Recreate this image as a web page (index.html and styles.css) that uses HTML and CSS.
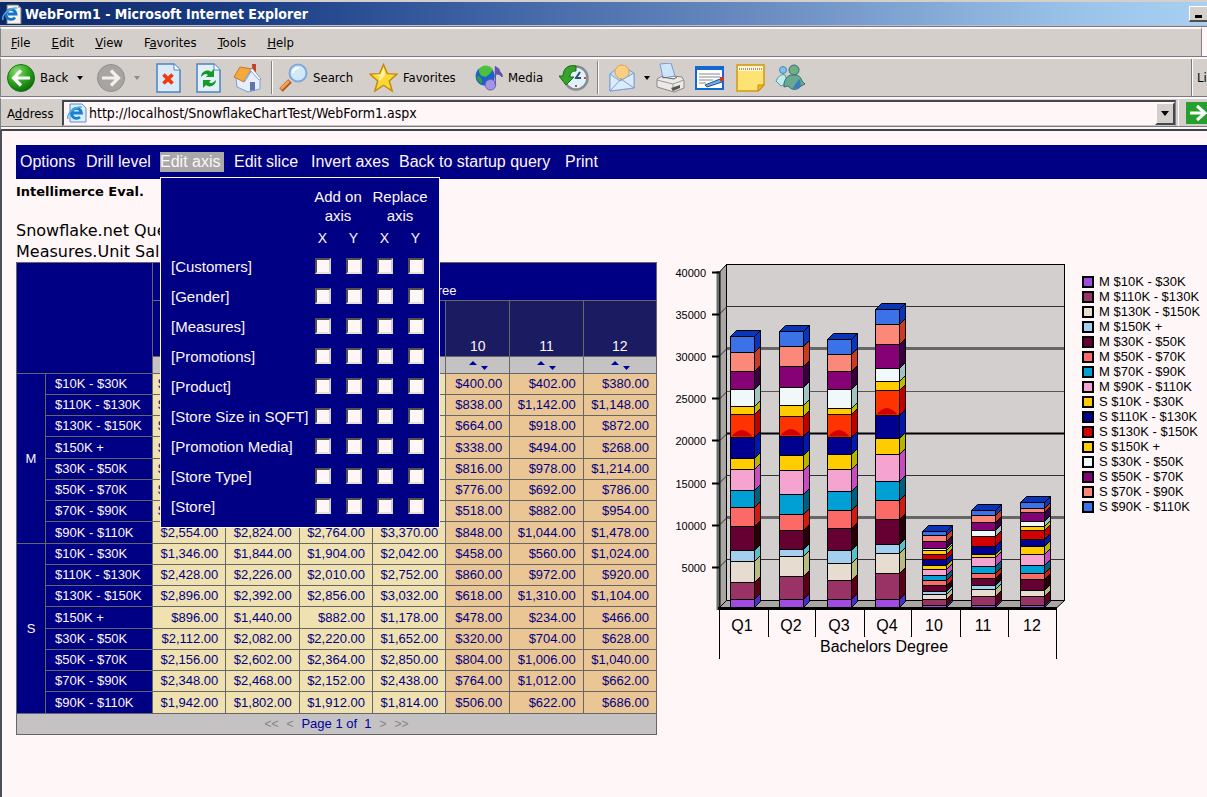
FILE: index.html
```html
<!DOCTYPE html>
<html lang="en">
<head>
<meta charset="utf-8">
<title>WebForm1 - Microsoft Internet Explorer</title>
<link rel="stylesheet" href="styles.css">
</head>
<body>
<header class="titlebar">
  <svg class="title-icon" width="20" height="20" viewBox="0 0 20 20" aria-hidden="true"><path d="M5 1h11l3 3v16H5z" fill="#f5f1ea" stroke="#777"/><path d="M16 1v3h3z" fill="#aaa"/><path d="M13 13.500A5 5 0 1 1 14 10H6" fill="none" stroke="#1673c9" stroke-width="2.800"/><path d="M1 16C-1 11 8 3 15 4" fill="none" stroke="#48aee8" stroke-width="1.500"/></svg>
  <h1 class="title-text">WebForm1 - Microsoft Internet Explorer</h1>
  <button class="minimize" aria-label="Minimize"><span class="minimize-mark"></span></button>
</header>
<nav class="menubar" aria-label="Browser menu">
  <div class="menu-items">
    <button><u>F</u>ile</button><button><u>E</u>dit</button><button><u>V</u>iew</button><button>F<u>a</u>vorites</button><button><u>T</u>ools</button><button><u>H</u>elp</button>
  </div>
  <div class="menu-logo"></div>
</nav>
<div class="toolbar-row">
  <div class="toolbar">
    <button class="tool">
      <svg width="28" height="28" viewBox="0 0 28 28" aria-hidden="true"><defs><radialGradient id="green" cx=".35" cy=".25" r=".8"><stop offset="0" stop-color="#8ada72"/><stop offset=".5" stop-color="#32aa20"/><stop offset="1" stop-color="#0b6608"/></radialGradient></defs><circle cx="14" cy="14" r="13.500" fill="url(#green)" stroke="#18761a"/><path d="M23 14H7M14 6.500L6.500 14l7.500 7.500" fill="none" stroke="#fff" stroke-width="3.200"/></svg>
      <span>Back</span><span class="caret"></span>
    </button>
    <button class="tool" aria-label="Forward">
      <svg width="28" height="28" viewBox="0 0 28 28" aria-hidden="true"><circle cx="14" cy="14" r="13.500" fill="#a6a5a2" stroke="#8e8e8c"/><path d="M5 14h16M14 6.500l7.500 7.500-7.500 7.500" fill="none" stroke="#f3efed" stroke-width="3.200"/></svg>
      <span class="caret caret-off"></span>
    </button>
    <button class="tool" aria-label="Stop">
      <svg width="25" height="30" viewBox="0 0 25 30" aria-hidden="true"><path d="M1 1h17l6 6v22H1z" fill="#dcebfa" stroke="#4b83c8" stroke-width="1.500"/><path d="M18 1v6h6" fill="#fff" stroke="#4b83c8"/><path d="M7.500 11.500l9 9M16.500 11.500l-9 9" stroke="#f23a0e" stroke-width="3.800"/></svg>
    </button>
    <button class="tool" aria-label="Refresh">
      <svg width="25" height="30" viewBox="0 0 25 30" aria-hidden="true"><path d="M1 1h17l6 6v22H1z" fill="#e3effb" stroke="#4b83c8" stroke-width="1.500"/><path d="M18 1v6h6" fill="#fff" stroke="#4b83c8"/><path d="M5 14c0-6 7-8 10-5l3-3v8h-8l2-2c-2-2-4-1-7 2zM20 17c0 6-7 8-10 5l-3 3v-8h8l-2 2c2 2 4 1 7-2z" fill="#159a24"/></svg>
    </button>
    <button class="tool" aria-label="Home">
      <svg width="29" height="30" viewBox="0 0 29 30" aria-hidden="true"><path d="M19 1h4v8h-4z" fill="#c8402a"/><path d="M3 15l9 2 7-10 8 8v11l-12 3L4 24z" fill="#e4effb" stroke="#7c9fcb"/><path d="M7 4l12 2-8 13-10-5z" fill="#f5a83c" stroke="#c9771c"/><path d="M19 5l9 11-2 1-8-9-5 9-2 1z" fill="#fff" stroke="#6e93bc" stroke-width=".8"/><path d="M17 19h5v8l-5 1z" fill="#5f75a8"/></svg>
    </button>
    <span class="divider"></span>
    <button class="tool">
      <svg width="29" height="29" viewBox="0 0 29 29" aria-hidden="true"><path d="M2 27l9-9" stroke="#a8541b" stroke-width="5"/><path d="M2 26l8-8" stroke="#f4a052" stroke-width="3"/><circle cx="19" cy="10" r="8.500" fill="#cfe9fb" stroke="#7fa8dc" stroke-width="2"/><path d="M14 10c0-4 3-5 6-5" fill="none" stroke="#fff" stroke-width="2"/></svg>
      <span>Search</span>
    </button>
    <button class="tool">
      <svg width="29" height="30" viewBox="0 0 30 30" aria-hidden="true"><path d="M15 1l4 9.500 10 .5-8 7 3 10.500-9-6-9 6L9 18l-8-7 10-.5z" fill="#fbd837" stroke="#c28a0b" stroke-width="1.500"/><path d="M15 4l2 8-7 7 1-6-6-1 7-.5z" fill="#fff3a0"/></svg>
      <span>Favorites</span>
    </button>
    <button class="tool">
      <svg width="28" height="27" viewBox="0 0 29 27" aria-hidden="true"><circle cx="10.500" cy="12" r="10" fill="#1c62c9"/><path d="M4 5c5-6 10-4 14-1 0 4-3 6-7 9-4-1-7-2-7-8z" fill="#4cc23c"/><path d="M2 12c4 0 6 4 5 8-4-2-5-5-5-8z" fill="#2f9f38"/><circle cx="16" cy="21" r="5.500" fill="#a495e0" stroke="#6a5ab8"/><path d="M21 21V2l4 3c0 4 4 3 3 8-2-3-4-3-6-3" fill="#6354b4" stroke="#574aa5"/></svg>
      <span>Media</span>
    </button>
    <button class="tool" aria-label="History">
      <svg width="30" height="28" viewBox="0 0 30 28" aria-hidden="true"><circle cx="17" cy="14" r="11.500" fill="#dff1fb" stroke="#858d93" stroke-width="2.500"/><path d="M17 14l4-6M16 14h6" stroke="#334f6b" stroke-width="2"/><path d="M17 2C8 0 4 6 4 12H0l7 9 8-8h-4c0-4 2-6 6-6z" fill="#36a32a" stroke="#1c6a1a"/><path d="M17 21v2M25 14h2" stroke="#d0502f" stroke-width="2"/></svg>
    </button>
    <span class="divider"></span>
    <button class="tool" aria-label="Mail">
      <svg width="26" height="28" viewBox="0 0 26 28" aria-hidden="true"><path d="M1 10L12 1l13 8v15L1 27z" fill="#c4dcf6" stroke="#7298cb"/><circle cx="13" cy="8" r="7" fill="#fbcf83" stroke="#e3a24b"/><path d="M1 10l10 7L25 9v15L1 27z" fill="#dcecfb" stroke="#7ba1d2"/><path d="M1 27l11-12 13 9" fill="none" stroke="#7ba1d2"/></svg>
      <span class="caret"></span>
    </button>
    <button class="tool" aria-label="Print">
      <svg width="29" height="30" viewBox="0 0 29 30" aria-hidden="true"><path d="M1 16l7-4 18 2 2 4v7l-10 4L1 24z" fill="#eceae6" stroke="#888"/><path d="M4 1l11-1 4 13-12 2z" fill="#cfe4fa" stroke="#779cc8"/><path d="M1 17l16 4 11-4M17 21v8" fill="none" stroke="#999"/><path d="M6 14l12 2 3-2" fill="none" stroke="#666"/><path d="M15 25l9-3v3l-7 3z" fill="#555"/></svg>
    </button>
    <button class="tool" aria-label="Edit">
      <svg width="30" height="26" viewBox="0 0 30 26" aria-hidden="true"><path d="M1 2h27v22H1z" fill="#fff" stroke="#1468d0" stroke-width="2"/><path d="M1 2h27v3H1z" fill="#1468d0"/><path d="M4 9h21M4 12h21M4 15h14M4 18h7" stroke="#888"/><path d="M10 20l15-6 2 3-15 5z" fill="#68aef0" stroke="#28558c"/><path d="M25 12h4v4h-4z" fill="#d5331e"/></svg>
    </button>
    <button class="tool" aria-label="Discuss">
      <svg width="29" height="28" viewBox="0 0 29 28" aria-hidden="true"><path d="M1 1h27v20l-6 6H1z" fill="#fce373" stroke="#d19a10" stroke-width="1.500"/><path d="M2 2h25v5H2z" fill="#fff5d6"/><path d="M3 5h23" stroke="#a99a77" stroke-dasharray="1 1" stroke-width="2"/><path d="M22 27v-6h6z" fill="#f6b91d" stroke="#c48a08"/></svg>
    </button>
    <button class="tool" aria-label="Messenger">
      <svg width="30" height="27" viewBox="0 0 30 27" aria-hidden="true"><circle cx="8" cy="6" r="3.500" fill="#7fc0e8" stroke="#4787b8"/><path d="M1 17c3-6 6-7 9-6l3 8-7 3z" fill="#c4ece8" stroke="#4e98a8"/><circle cx="19" cy="6" r="5" fill="#6faf83" stroke="#386d75"/><path d="M9 19c3-9 7-8 10-8s6 0 8 6l3 3-4 2c-4 5-10 4-13 0l-4 1z" fill="#69a98d" stroke="#356c8a"/><path d="M24 15c2 2 2 5 1 9l-8 1z" fill="#3b7cbc"/></svg>
    </button>
  </div>
  <div class="links-label">Links</div>
</div>
<form class="address-row">
  <label for="url">A<u>d</u>dress</label>
  <div class="address-box">
    <svg width="20" height="20" viewBox="0 0 20 20" aria-hidden="true"><path d="M3 1h12l4 4v14H3z" fill="#e0eefb" stroke="#5b8ccd"/><path d="M13 14A5 5 0 1 1 14.500 10H6" fill="none" stroke="#1681d3" stroke-width="2.800"/><path d="M1 16C-1 11 8 3 15 4" fill="none" stroke="#45aeea" stroke-width="1.500"/></svg>
    <input id="url" type="text" value="http://localhost/SnowflakeChartTest/WebForm1.aspx">
    <button type="button" class="drop" aria-label="Show addresses"><span class="caret"></span></button>
  </div>
  <button type="button" class="go" aria-label="Go"><svg width="24" height="22" viewBox="0 0 24 22" aria-hidden="true"><path d="M0 0h24v22H0z" fill="#25a02c"/><path d="M4 11h15M11 4l8 7-8 7" fill="none" stroke="#fff" stroke-width="3"/></svg></button>
</form>
<main class="page">
  <nav class="query-nav" aria-label="Query">
    <a href="#options">Options</a>
    <a href="#drill">Drill level</a>
    <div class="axis-menu">
      <a class="active" href="#axis">Edit axis</a>
      <form class="popup">
        <table class="axis-table">
          <colgroup><col class="axis-name"><col><col><col><col></colgroup>
          <thead>
            <tr class="axis-head"><th></th><th colspan="2">Add on axis</th><th colspan="2">Replace axis</th></tr>
            <tr class="axis-xy"><th></th><th>X</th><th>Y</th><th>X</th><th>Y</th></tr>
          </thead>
          <tbody>
            <tr><th>[Customers]</th><td><input type="checkbox" aria-label="Customers add X"></td><td><input type="checkbox" aria-label="Customers add Y"></td><td><input type="checkbox" aria-label="Customers replace X"></td><td><input type="checkbox" aria-label="Customers replace Y"></td></tr>
            <tr><th>[Gender]</th><td><input type="checkbox" aria-label="Gender add X"></td><td><input type="checkbox" aria-label="Gender add Y"></td><td><input type="checkbox" aria-label="Gender replace X"></td><td><input type="checkbox" aria-label="Gender replace Y"></td></tr>
            <tr><th>[Measures]</th><td><input type="checkbox" aria-label="Measures add X"></td><td><input type="checkbox" aria-label="Measures add Y"></td><td><input type="checkbox" aria-label="Measures replace X"></td><td><input type="checkbox" aria-label="Measures replace Y"></td></tr>
            <tr><th>[Promotions]</th><td><input type="checkbox" aria-label="Promotions add X"></td><td><input type="checkbox" aria-label="Promotions add Y"></td><td><input type="checkbox" aria-label="Promotions replace X"></td><td><input type="checkbox" aria-label="Promotions replace Y"></td></tr>
            <tr><th>[Product]</th><td><input type="checkbox" aria-label="Product add X"></td><td><input type="checkbox" aria-label="Product add Y"></td><td><input type="checkbox" aria-label="Product replace X"></td><td><input type="checkbox" aria-label="Product replace Y"></td></tr>
            <tr><th>[Store Size in SQFT]</th><td><input type="checkbox" aria-label="Store Size add X"></td><td><input type="checkbox" aria-label="Store Size add Y"></td><td><input type="checkbox" aria-label="Store Size replace X"></td><td><input type="checkbox" aria-label="Store Size replace Y"></td></tr>
            <tr><th>[Promotion Media]</th><td><input type="checkbox" aria-label="Promotion Media add X"></td><td><input type="checkbox" aria-label="Promotion Media add Y"></td><td><input type="checkbox" aria-label="Promotion Media replace X"></td><td><input type="checkbox" aria-label="Promotion Media replace Y"></td></tr>
            <tr><th>[Store Type]</th><td><input type="checkbox" aria-label="Store Type add X"></td><td><input type="checkbox" aria-label="Store Type add Y"></td><td><input type="checkbox" aria-label="Store Type replace X"></td><td><input type="checkbox" aria-label="Store Type replace Y"></td></tr>
            <tr><th>[Store]</th><td><input type="checkbox" aria-label="Store add X"></td><td><input type="checkbox" aria-label="Store add Y"></td><td><input type="checkbox" aria-label="Store replace X"></td><td><input type="checkbox" aria-label="Store replace Y"></td></tr>
          </tbody>
        </table>
      </form>
    </div>
    <a href="#slice">Edit slice</a>
    <a href="#invert">Invert axes</a>
    <a href="#startup">Back to startup query</a>
    <a href="#print">Print</a>
  </nav>
  <p class="eval">Intellimerce Eval.</p>
  <p class="query-title">Snowflake.net Query</p>
  <p class="query-title">Measures.Unit Sales</p>
  <div class="results">
    <table class="pivot">
      <colgroup><col class="c-group"><col class="c-range"><col class="c-wide"><col class="c-wide"><col class="c-wide"><col class="c-wide"><col class="c-month"><col class="c-wide"><col class="c-wide"></colgroup>
      <thead>
        <tr class="h-top"><th colspan="2" rowspan="3"></th><th colspan="7">Bachelors Degree</th></tr>
        <tr class="h-cols"><th></th><th></th><th></th><th></th><th class="month">10</th><th class="month">11</th><th class="month">12</th></tr>
        <tr class="h-sort"><td></td><td></td><td></td><td></td>
          <td><button aria-label="Sort 10"><svg width="20" height="10" viewBox="0 0 20 10"><path d="M1 5l4-4 4 4zM13 6h7l-3.500 4z"/></svg></button></td>
          <td><button aria-label="Sort 11"><svg width="20" height="10" viewBox="0 0 20 10"><path d="M1 5l4-4 4 4zM13 6h7l-3.500 4z"/></svg></button></td>
          <td><button aria-label="Sort 12"><svg width="20" height="10" viewBox="0 0 20 10"><path d="M1 5l4-4 4 4zM13 6h7l-3.500 4z"/></svg></button></td></tr>
      </thead>
      <tbody>
        <tr><th class="group" rowspan="8">M</th><th>$10K - $30K</th><td class="cut">$</td><td></td><td></td><td></td><td>$400.00</td><td>$402.00</td><td>$380.00</td></tr>
        <tr><th>$110K - $130K</th><td class="cut">$</td><td></td><td></td><td></td><td>$838.00</td><td>$1,142.00</td><td>$1,148.00</td></tr>
        <tr><th>$130K - $150K</th><td class="cut">$</td><td></td><td></td><td></td><td>$664.00</td><td>$918.00</td><td>$872.00</td></tr>
        <tr><th>$150K +</th><td class="cut">$</td><td></td><td></td><td></td><td>$338.00</td><td>$494.00</td><td>$268.00</td></tr>
        <tr><th>$30K - $50K</th><td class="cut">$</td><td></td><td></td><td></td><td>$816.00</td><td>$978.00</td><td>$1,214.00</td></tr>
        <tr><th>$50K - $70K</th><td class="cut">$</td><td></td><td></td><td></td><td>$776.00</td><td>$692.00</td><td>$786.00</td></tr>
        <tr><th>$70K - $90K</th><td class="cut">$</td><td></td><td></td><td></td><td>$518.00</td><td>$882.00</td><td>$954.00</td></tr>
        <tr><th>$90K - $110K</th><td>$2,554.00</td><td>$2,824.00</td><td>$2,764.00</td><td>$3,370.00</td><td>$848.00</td><td>$1,044.00</td><td>$1,478.00</td></tr>
        <tr><th class="group" rowspan="8">S</th><th>$10K - $30K</th><td>$1,346.00</td><td>$1,844.00</td><td>$1,904.00</td><td>$2,042.00</td><td>$458.00</td><td>$560.00</td><td>$1,024.00</td></tr>
        <tr><th>$110K - $130K</th><td>$2,428.00</td><td>$2,226.00</td><td>$2,010.00</td><td>$2,752.00</td><td>$860.00</td><td>$972.00</td><td>$920.00</td></tr>
        <tr><th>$130K - $150K</th><td>$2,896.00</td><td>$2,392.00</td><td>$2,856.00</td><td>$3,032.00</td><td>$618.00</td><td>$1,310.00</td><td>$1,104.00</td></tr>
        <tr><th>$150K +</th><td>$896.00</td><td>$1,440.00</td><td>$882.00</td><td>$1,178.00</td><td>$478.00</td><td>$234.00</td><td>$466.00</td></tr>
        <tr><th>$30K - $50K</th><td>$2,112.00</td><td>$2,082.00</td><td>$2,220.00</td><td>$1,652.00</td><td>$320.00</td><td>$704.00</td><td>$628.00</td></tr>
        <tr><th>$50K - $70K</th><td>$2,156.00</td><td>$2,602.00</td><td>$2,364.00</td><td>$2,850.00</td><td>$804.00</td><td>$1,006.00</td><td>$1,040.00</td></tr>
        <tr><th>$70K - $90K</th><td>$2,348.00</td><td>$2,468.00</td><td>$2,152.00</td><td>$2,438.00</td><td>$764.00</td><td>$1,012.00</td><td>$662.00</td></tr>
        <tr><th>$90K - $110K</th><td>$1,942.00</td><td>$1,802.00</td><td>$1,912.00</td><td>$1,814.00</td><td>$506.00</td><td>$622.00</td><td>$686.00</td></tr>
      </tbody>
      <tfoot>
        <tr><td colspan="9"><div class="pager"><span class="off">&lt;&lt;</span><span class="off">&lt;</span><span>Page 1 of &nbsp;1</span><span class="off">&gt;</span><span class="off">&gt;&gt;</span></div></td></tr>
      </tfoot>
    </table>
    <svg id="chart" class="chart" width="400" height="400" viewBox="670 262 400 400" role="img" aria-label="Unit sales by quarter"></svg>
    <ul id="legend" class="legend"></ul>
  </div>
</main>
<script src="chart.js"></script>
</body>
</html>
```

FILE: styles.css
```css
* { box-sizing: border-box; }
html, body { height: 100%; }
body {
  margin: 0;
  display: flex;
  flex-direction: column;
  min-height: 100%;
  overflow: hidden;
  background: #fff6f7;
  color: #000;
  font: 13px/16px "DejaVu Sans Condensed", "DejaVu Sans", sans-serif;
}
button {
  margin: 0;
  padding: 0;
  border: 0;
  background: none;
  color: inherit;
  font: inherit;
}
.titlebar {
  display: flex;
  align-items: center;
  height: 26px;
  border-top: 2px solid #d5cfcb;
  border-bottom: 1px solid #b8c0d0;
  background: linear-gradient(90deg, #0e2868, #1a3c84 20%, #3f62a4 40%, #6e90c4 65%, #9cc4ea 90%, #a8d0f2);
}
.title-icon { margin: 0 3px 0 2px; }
.title-text {
  flex: 1;
  margin: 0;
  color: #fff;
  font-size: 14px;
  font-weight: bold;
}
.minimize {
  display: flex;
  align-items: flex-end;
  justify-content: flex-start;
  width: 18px;
  height: 16px;
  padding: 0 0 2px 5px;
  border: 1px solid #fff;
  border-right: 0;
  border-bottom: 2px solid #50504e;
  background: #d5cfcb;
}
.minimize-mark { width: 7px; height: 3px; background: #000; }
.menubar {
  display: flex;
  height: 31px;
  border-top: 1px solid #777b80;
  border-bottom: 1px solid #777b80;
  background: #d5cfcb;
}
.menu-items {
  display: flex;
  align-items: center;
  flex: 1;
  gap: 21px;
  padding-left: 10px;
  border-top: 2px solid #fff6f7;
  border-right: 1px solid #808488;
  border-left: 1px solid #808488;
}
.menu-logo { width: 5px; background: #fff6f7; }
.toolbar-row {
  display: flex;
  height: 40px;
  border-top: 2px solid #fff6f7;
  border-bottom: 1px solid #777b80;
  border-left: 1px solid #808488;
  background: #d5cfcb;
}
.toolbar {
  flex: 1;
  display: grid;
  grid-template-columns: 90px 59px 40px 37px 38px 8px 90px 106px 84px 38px 12px 47px 39px 41px 39px 40px;
  align-items: center;
  justify-items: start;
  padding-left: 6px;
  border-right: 1px solid #777b80;
}
.tool {
  display: flex;
  align-items: center;
  gap: 5px;
  white-space: nowrap;
}
.tool svg { flex: none; }
.caret {
  margin: 0 4px;
  border: 3px solid transparent;
  border-top: 4px solid #000;
  border-bottom: 0;
}
.caret-off { border-top-color: #8c8c8a; }
.divider {
  width: 2px;
  height: 33px;
  border-left: 1px solid #808488;
  background: #fff;
}
.links-label {
  display: flex;
  align-items: center;
  width: 15px;
  padding-left: 4px;
  border-left: 1px solid #fff;
  overflow: hidden;
}
.address-row {
  display: flex;
  align-items: center;
  height: 34px;
  padding: 0 0 0 6px;
  border-top: 2px solid #fff6f7;
  border-bottom: 2px solid #40444a;
  border-left: 1px solid #808488;
  background: #d5cfcb;
  box-shadow: inset 0 -2px #fff6f7, inset 0 -3px #777b80;
}
.address-row label { width: 55px; }
.address-box {
  display: flex;
  align-items: center;
  flex: 1;
  height: 26px;
  margin-bottom: 3px;
  padding-left: 3px;
  border: 2px solid #44484c;
  border-right: 1px solid #808488;
  border-bottom: 1px solid #c8c4c2;
  background: #fff6f7;
}
.address-box input {
  flex: 1;
  min-width: 0;
  padding: 0 2px;
  border: 0;
  outline: 0;
  background: none;
  color: #000;
  font: inherit;
  font-size: 14px;
}
.drop {
  display: flex;
  align-items: center;
  justify-content: center;
  width: 20px;
  height: 23px;
  border: 2px solid #fff6f7;
  border-right-color: #44484c;
  border-bottom-color: #44484c;
  background: #d5cfcb;
}
.drop .caret { margin: 0; border-width: 5px 4px 0; }
.go {
  display: flex;
  align-items: center;
  width: 29px;
  height: 26px;
  margin: 0 0 3px 2px;
  padding-left: 7px;
  border-left: 1px solid #fff;
  overflow: hidden;
}
.go svg { flex: none; }

.page {
  flex: 1;
  padding: 14px 0 0 14px;
  border-left: 2px solid #4c5056;
  font-family: "Liberation Sans", sans-serif;
}
.query-nav {
  display: grid;
  grid-template-columns: 66px 74px 74px 77px 88px 166px auto;
  align-items: center;
  height: 34px;
  padding-left: 4px;
  background: #000084;
  color: #fff6f7;
  font-size: 16px;
  line-height: 20px;
  white-space: nowrap;
}
.query-nav a { color: inherit; text-decoration: none; }
.axis-menu { position: relative; }
.query-nav .active { display: block; width: 64px; background: #a9a9a9; }
.popup {
  position: absolute;
  top: 25px;
  left: 0;
  z-index: 2;
  padding: 9px 8px 6px;
  border: 1px solid #fff6f7;
  background: #000084;
}
.axis-table {
  border-collapse: collapse;
  table-layout: fixed;
  width: 262px;
  font-size: 15px;
  line-height: 19px;
}
.axis-name { width: 138px; }
.axis-table th, .axis-table td { padding: 0; font-weight: normal; text-align: center; }
.axis-head th { white-space: normal; }
.axis-xy { height: 26px; font-size: 14px; }
.axis-table tbody tr { height: 30px; }
.axis-table tbody th { padding-left: 2px; text-align: left; }
.axis-table input {
  display: block;
  appearance: none;
  width: 16px;
  height: 16px;
  margin: 0 auto;
  border: 2px solid #505050;
  border-right-color: #d5cfcb;
  border-bottom-color: #e8e2de;
  background: #fff6f7;
}
.eval {
  margin: 0 0 15px;
  font: bold 13px/26px "DejaVu Sans", sans-serif;
}
.query-title {
  margin: 0;
  font: 16px/21px "DejaVu Sans", sans-serif;
}
.results { display: flex; align-items: flex-start; }
.pivot {
  flex: none;
  width: 641px;
  border-collapse: collapse;
  table-layout: fixed;
  color: #000084;
  font-size: 13px;
  line-height: 16px;
}
.c-group { width: 29px; }
.c-range { width: 107px; }
.c-month { width: 64px; }
.pivot th, .pivot td { padding: 0; border: 1px solid #666668; font-weight: normal; }
.pivot th { background: #000084; color: #fff6f7; }
.pivot thead th { vertical-align: bottom; }
.h-top { height: 38px; }
.h-top th { padding-bottom: 1px; }
.h-cols { height: 56px; font-size: 14px; }
.pivot .h-cols th { padding-bottom: 2px; }
.pivot .h-cols .month { background: #1b1b62; }
.h-sort { height: 17px; }
.pivot .h-sort td { background: #c4c2c2; text-align: center; }
.h-sort button { display: block; margin: 0 auto; height: 10px; }
.h-sort svg { display: block; fill: #0000a0; }
.pivot tbody tr { height: 21px; }
.pivot tbody tr:nth-child(4n) { height: 22px; }
.pivot tbody th { padding-left: 9px; text-align: left; }
.pivot tbody .group { padding: 0; text-align: center; }
.pivot tbody td { padding-right: 7px; background: #efe2b0; text-align: right; }
.pivot tbody td:nth-last-child(-n+3) { background: #eac694; }
.pivot tbody .cut { padding-left: 5px; text-align: left; }
.pivot tfoot td { height: 21px; background: #c4c2c2; }
.pager { display: flex; justify-content: center; gap: 8px; font-size: 13px; color: #0000a0; }
.pager .off { color: #858585; font-size: 12px; }

.chart { display: block; flex: none; margin-left: 13px; }
.chart text { font-family: "Liberation Sans", sans-serif; fill: #000; }
.tick { font-size: 11px; text-anchor: end; }
.cat { font-size: 16px; text-anchor: middle; }
.legend {
  flex: none;
  margin: 12px 0 0 12px;
  padding: 0;
  list-style: none;
  font-size: 13px;
  line-height: 15px;
  white-space: nowrap;
}
.legend li { display: flex; align-items: center; gap: 5px; }
.swatch { width: 12px; height: 12px; border: 2px solid #000; }
```

FILE: chart.js
```javascript
const series = [
  ["S $90K - $110K", "#3c72e8", "#0a35b8"],
  ["S $70K - $90K", "#fb8878", "#c83c24"],
  ["S $50K - $70K", "#860076", "#38003c"],
  ["S $30K - $50K", "#f0f8fa", "#a0c4c0"],
  ["S $150K +", "#ffcc00", "#bcbc00"],
  ["S $130K - $150K", "#d20000", "#c00000"],
  ["S $110K - $130K", "#000090", "#0018b0"],
  ["S $10K - $30K", "#ffcc00", "#b4b400"],
  ["M $90K - $110K", "#f5a4d2", "#c64cc0"],
  ["M $70K - $90K", "#009fd4", "#00607c"],
  ["M $50K - $70K", "#fb6a66", "#d01c10"],
  ["M $30K - $50K", "#660032", "#280008"],
  ["M $150K +", "#a4cfee", "#58c0c8"],
  ["M $130K - $150K", "#e6ddd0", "#b8bc80"],
  ["M $110K - $130K", "#993366", "#5c0018"],
  ["M $10K - $30K", "#a04ce0", "#4830c4"]
];
// Each bar: label, left edge, then the top edge of every segment from the highest down.
const bars = [
  ["Q1", 730, [336, 352, 371, 389, 406, 414, 437, 458, 469, 490, 507, 526, 550, 561, 582, 599]],
  ["Q2", 779, [331, 346, 366, 387, 405, 416, 436, 455, 470, 494, 514, 530, 549, 556, 576, 599]],
  ["Q3", 827, [339, 354, 371, 389, 408, 414, 437, 454, 469, 491, 510, 528, 550, 563, 580, 599]],
  ["Q4", 875, [309, 324, 344, 368, 381, 390, 415, 438, 454, 481, 500, 519, 544, 553, 573, 599]],
  ["10", 922, [531, 535, 541, 548, 550, 554, 559, 565, 569, 575, 580, 585, 591, 594, 599, 605]],
  ["11", 971, [510, 515, 522, 530, 536, 536, 546, 554, 557, 566, 573, 578, 585, 589, 596, 605]],
  ["12", 1020, [502, 508, 512, 521, 526, 530, 539, 546, 554, 565, 573, 579, 590, 590, 596, 605]]
];
const floor = 607;
const poly = (points, fill) => `<polygon points="${points}" fill="${fill}" stroke="#000"/>`;
const line = (x1, y1, x2, y2, color, width) =>
  `<line x1="${x1}" y1="${y1}" x2="${x2}" y2="${y2}" stroke="${color}" stroke-width="${width}"/>`;

let art = `<rect x="726.5" y="264.5" width="338" height="336" fill="#d3cfcf" stroke="#000"/>`;
art += poly("719.5,272 726.5,264.5 726.5,600.5 719.5,607.5", "#aaa6a4");
art += poly("719.5,607.5 726.5,600.5 1064.5,600.5 1057,607.5", "#aaa6a4");
const grid = [[306, "#333", 1], [348, "#666", 3], [391, "#555", 1], [433, "#000", 2], [475, "#333", 1], [517, "#666", 3], [559, "#333", 1]];
for (const [y, color, width] of grid) {
  art += line(727, y + 0.5, 1064, y + 0.5, color, width);
  art += line(720, y + 7.5, 727, y + 0.5, "#333", 1);
}
art += line(718, 271, 718, 610, "#66706a", 3) + line(720, 271, 720, 610, "#000", 1);
for (let i = 0; i < 8; i++) {
  const y = Math.round(271.5 + i * 42.2);
  art += line(712, y + 0.5, 719, y + 0.5, "#000", 2);
  art += `<text class="tick" x="706" y="${y + 5}">${40000 - i * 5000}</text>`;
}
for (const [label, x, tops] of bars) {
  const left = x + 0.5, right = x + 24.5, back = x + 30.5;
  tops.forEach((top, i) => {
    const end = i < 15 ? tops[i + 1] : floor;
    if (end === top) return;
    const y = top + 0.5, b = end + 0.5;
    // Tall S $130K - $150K segments carry a bright face with a dark arc at the base.
    const bright = i === 5 && b - y >= 20;
    art += poly(`${left},${y} ${right},${y} ${right},${b} ${left},${b}`, bright ? "#ff3300" : series[i][1]);
    if (bright) art += `<path d="M${left + 1} ${b - 1}q10 -13 21 0z" fill="#d20000"/>`;
    art += poly(`${right},${y} ${back},${y - 6} ${back},${b - 6} ${right},${b}`, series[i][2]);
  });
  const y = tops[0] + 0.5;
  art += poly(`${left},${y} ${left + 6},${y - 6} ${back},${y - 6} ${right},${y}`, series[0][2]);
  art += `<text class="cat" x="${x + 12}" y="631">${label}</text>`;
}
art += line(718, 608.5, 1057, 608.5, "#000", 3);
art += line(719.5, 608, 719.5, 659, "#000", 1) + line(1056.5, 608, 1056.5, 659, "#000", 1);
for (const x of [768, 815, 864, 911, 960, 1008]) art += line(x + 0.5, 608, x + 0.5, 637, "#000", 1);
art += `<text class="cat" x="884" y="652">Bachelors Degree</text>`;
document.getElementById("chart").innerHTML = art;

const ordered = [...series.slice(8).reverse(), ...series.slice(0, 8).reverse()];
document.getElementById("legend").innerHTML = ordered
  .map(([name, color]) => `<li><span class="swatch" style="background:${color}"></span>${name}</li>`)
  .join("");
```
